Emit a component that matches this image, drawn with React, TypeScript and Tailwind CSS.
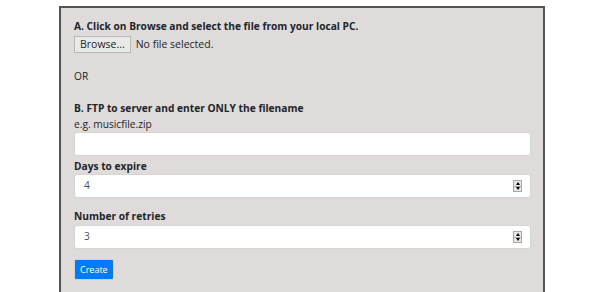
import React from "react";

function Spinner() {
  return (
    <div className="flex flex-col w-[9px] h-[12px] border border-[#a9a9a9] bg-[#e6e6e6]">
      <div className="flex-1 flex items-center justify-center border-b border-[#a9a9a9]">
        <div className="w-0 h-0 border-l-[2.5px] border-r-[2.5px] border-b-[3px] border-l-transparent border-r-transparent border-b-black" />
      </div>
      <div className="flex-1 flex items-center justify-center">
        <div className="w-0 h-0 border-l-[2.5px] border-r-[2.5px] border-t-[3px] border-l-transparent border-r-transparent border-t-black" />
      </div>
    </div>
  );
}

function Field({ value, spinner }: { value?: string; spinner?: boolean }) {
  return (
    <div className="h-[24px] w-[457px] bg-white border border-[#d5d5d5] rounded-[3px] flex items-center pl-[9px] pr-[8px] text-[10.2px] text-[#495057]">
      <span className="flex-1">{value}</span>
      {spinner && <Spinner />}
    </div>
  );
}

export default function App() {
  return (
    <div
      className="w-[600px] h-[292px] bg-white overflow-hidden"
      style={{ fontFamily: '"Open Sans", "Noto Sans", sans-serif' }}
    >
      <div className="ml-[59px] mt-[6px] w-[486px] h-[300px] border-t-2 border-l-2 border-r-2 border-[#555] bg-[#dfdbdb] pl-[13px] text-[#212529] text-[10.2px]">
        <div className="pt-[11px] font-bold leading-[15px]">A. Click on Browse and select the file from your local PC.</div>
        <div className="mt-[2px] flex items-center h-[17px]">
          <div className="h-[17px] px-[5px] border border-[#b8b8b8] bg-[#e9e9e9] flex items-center text-[10.5px] text-[#222]">Browse...</div>
          <span className="ml-[5px] text-[10.5px]">No file selected.</span>
        </div>
        <div className="mt-[16px] leading-[15px]">OR</div>
        <div className="mt-[17px] font-bold leading-[15px]">B. FTP to server and enter ONLY the filename</div>
        <div className="mt-[1px] leading-[15px]">e.g. musicfile.zip</div>
        <div className="mt-0"><Field /></div>
        <div className="mt-[3px] font-bold leading-[15px]">Days to expire</div>
        <div className="mt-0"><Field value="4" spinner /></div>
        <div className="mt-[11px] font-bold leading-[15px]">Number of retries</div>
        <div className="mt-[1px]"><Field value="3" spinner /></div>
        <div className="mt-[10px]">
          <div className="inline-flex items-center h-[21px] px-[5px] bg-[#007bff] border border-[#f0c9a0] rounded-[2px] text-white text-[9px]">Create</div>
        </div>
      </div>
    </div>
  );
}
